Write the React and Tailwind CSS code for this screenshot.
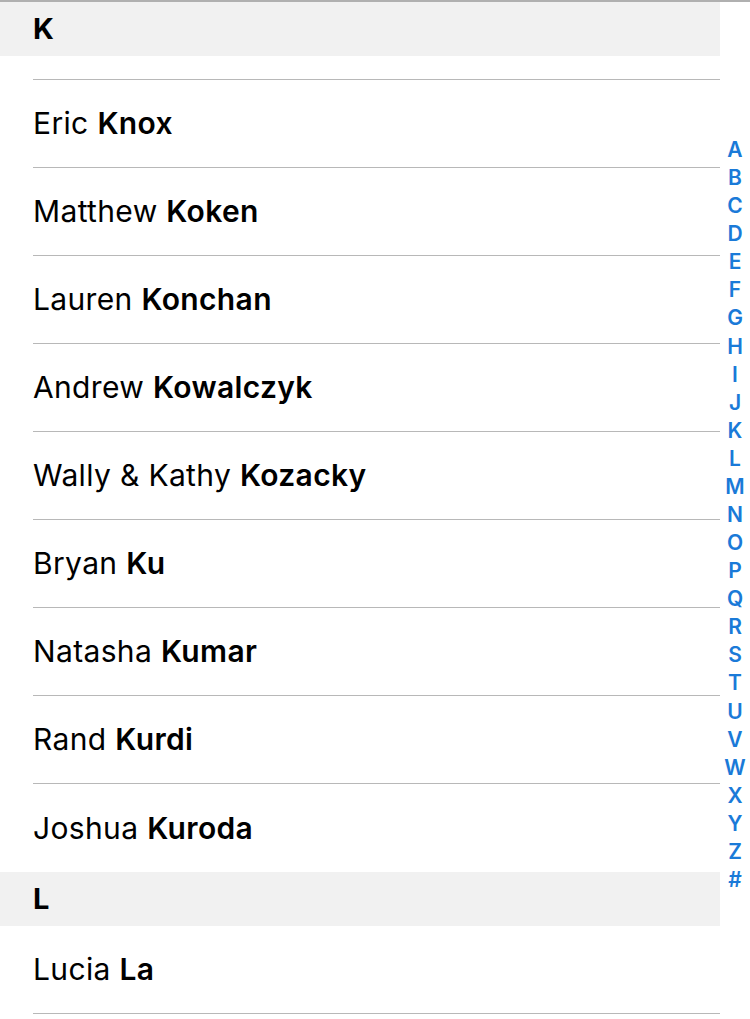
import React from "react";

const rowsK = [
  ["Eric", "Knox"],
  ["Matthew", "Koken"],
  ["Lauren", "Konchan"],
  ["Andrew", "Kowalczyk"],
  ["Wally & Kathy", "Kozacky"],
  ["Bryan", "Ku"],
  ["Natasha", "Kumar"],
  ["Rand", "Kurdi"],
  ["Joshua", "Kuroda"],
];

const index = "ABCDEFGHIJKLMNOPQRSTUVWXYZ#".split("");

function Row({ first, last, border = true }) {
  return (
    <div className={border ? "ml-[33px] h-[88px] border-b border-[#b8b8b8] flex items-center" : "ml-[33px] h-[88px] flex items-center"}>
      <span className="text-[30px] text-black tracking-[0.35px]">
        {first} <span className="font-semibold">{last}</span>
      </span>
    </div>
  );
}

export default function App() {
  return (
    <div
      className="relative w-[750px] h-[1019px] overflow-hidden bg-white border-t-2 border-[#b0b0b0]"
      style={{ fontFamily: "Inter, 'Noto Sans', sans-serif" }}
    >
      <div className="w-[720px]">
        <div className="h-[54px] bg-[#f1f1f1] pl-[33px] flex items-center text-[29px] font-bold text-black">K</div>
        <div className="ml-[33px] h-[24px] border-b border-[#b8b8b8]"></div>
        {rowsK.map(([f, l], i) => (
          <Row key={l} first={f} last={l} border={i !== rowsK.length - 1} />
        ))}
        <div className="h-[54px] bg-[#f1f1f1] pl-[33px] flex items-center text-[29px] font-bold text-black">L</div>
        <Row first="Lucia" last="La" />
      </div>
      <div className="absolute right-0 top-[134px] w-[30px] flex flex-col items-center">
        {index.map((c) => (
          <div key={c} className="h-[28.08px] leading-[28.08px] text-[21px] font-semibold text-[#1a7ad8]">
            {c}
          </div>
        ))}
      </div>
    </div>
  );
}
